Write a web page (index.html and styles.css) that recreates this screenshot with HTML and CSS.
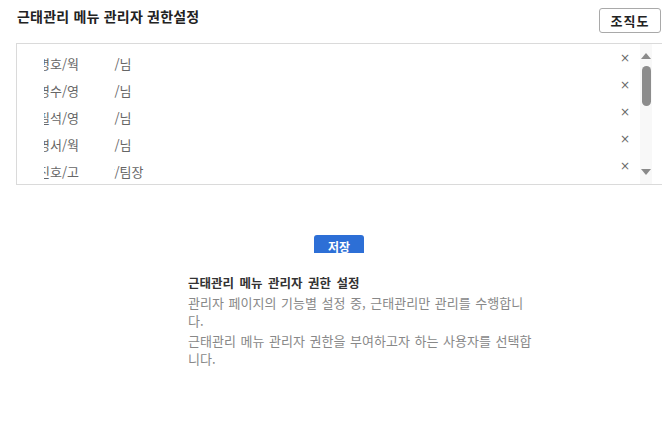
FILE: index.html
```html
<!DOCTYPE html>
<html lang="ko">
<head>
<meta charset="utf-8">
<link rel="stylesheet" href="styles.css">
</head>
<body>
<div class="page">
  <header class="top">
    <h1 class="title">근태관리 메뉴 관리자 권한설정</h1>
    <button class="org-btn">조직도</button>
  </header>

  <section class="box">
    <div class="list">
      <div class="row"><span class="c1"><span class="t1">병호/웍</span></span><span class="c2"><span class="t2">원/님</span></span><span class="x">×</span></div>
      <div class="row"><span class="c1"><span class="t1">영수/영</span></span><span class="c2"><span class="t2">원/님</span></span><span class="x">×</span></div>
      <div class="row"><span class="c1"><span class="t1">필석/영</span></span><span class="c2"><span class="t2">원/님</span></span><span class="x">×</span></div>
      <div class="row"><span class="c1"><span class="t1">영서/웍</span></span><span class="c2"><span class="t2">원/님</span></span><span class="x">×</span></div>
      <div class="row"><span class="c1"><span class="t1">진호/고</span></span><span class="c2"><span class="t2">장/팀장</span></span><span class="x">×</span></div>
    </div>
    <div class="scroll">
      <span class="arrow up"></span>
      <span class="thumb"></span>
      <span class="arrow down"></span>
    </div>
  </section>

  <div class="save-wrap">
    <div class="save-clip"><button class="save">저장</button></div>
  </div>

  <section class="desc">
    <h2 class="desc-title">근태관리 메뉴 관리자 권한 설정</h2>
    <p>관리자 페이지의 기능별 설정 중, 근태관리만 관리를 수행합니다.</p>
    <p>근태관리 메뉴 관리자 권한을 부여하고자 하는 사용자를 선택합니다.</p>
  </section>
</div>
</body>
</html>
```

FILE: styles.css
```css
html, body {
  margin: 0;
  padding: 0;
  background: #ffffff;
  overflow: hidden;
}

body {
  font-family: "Noto Sans CJK KR", "Noto Sans", sans-serif;
  font-size: 12px;
  color: #333;
}

.page {
  width: 662px;
  height: 448px;
}

.top {
  display: flex;
  justify-content: space-between;
  align-items: flex-start;
  padding-top: 7px;
}

.title {
  margin: 0;
  padding: 0 0 0 17px;
  font-size: 14px;
  letter-spacing: 0.2px;
  line-height: 18px;
  font-weight: bold;
  color: #222;
}

.org-btn {
  width: 62px;
  height: 25px;
  margin: 1px 1px 0 0;
  padding: 0;
  border: 1px solid #a9a9a9;
  border-radius: 3px;
  background: #fff;
  font-family: inherit;
  font-size: 13px;
  font-weight: bold;
  color: #222;
  letter-spacing: 1px;
}

.box {
  display: flex;
  margin: 10px 0 0 16px;
  height: 140px;
  border: 1px solid #dadada;
  border-right: none;
}

.list {
  flex: 1;
  padding: 6px 0 0 27px;
}

.row {
  display: flex;
  align-items: center;
  height: 27px;
  color: #666;
  font-size: 13px;
}

.c1 {
  width: 70px;
  overflow: hidden;
  white-space: nowrap;
}

.t1 {
  display: inline-block;
  margin-left: -6px;
}

.c2 {
  width: 80px;
  overflow: hidden;
  white-space: nowrap;
}

.t2 {
  display: inline-block;
  margin-left: -11.5px;
}

.x {
  margin-left: auto;
  margin-right: 10px;
  margin-bottom: 11px;
  font-family: "DejaVu Sans", sans-serif;
  font-size: 12px;
  color: #6a6a6a;
}

.scroll {
  width: 12px;
  margin-right: 10px;
  background: #f8f8f8;
  display: flex;
  flex-direction: column;
  align-items: center;
}

.arrow {
  width: 0;
  height: 0;
  border-left: 5px solid transparent;
  border-right: 5px solid transparent;
}

.arrow.up {
  margin-top: 9px;
  border-bottom: 6px solid #8a8a8a;
}

.thumb {
  width: 9px;
  height: 40px;
  margin-top: 7px;
  border-radius: 5px;
  background: #8c8c8c;
}

.arrow.down {
  margin-top: auto;
  margin-bottom: 9px;
  border-top: 6px solid #8a8a8a;
}

.save-wrap {
  padding: 50px 0 0 314px;
}

.save-clip {
  width: 50px;
  height: 18px;
  overflow: hidden;
  border-radius: 3px 3px 0 0;
}

.save {
  display: block;
  width: 50px;
  height: 24px;
  padding: 0;
  border: none;
  background: #2d6fd6;
  color: #fff;
  font-family: inherit;
  font-size: 12px;
  font-weight: bold;
  line-height: 24px;
}

.desc {
  width: 348px;
  margin: 22px 0 0 188px;
}

.desc-title {
  margin: 0 0 3px;
  font-size: 12.5px;
  font-weight: bold;
  line-height: 16px;
  color: #333;
  word-spacing: 2px;
}

.desc p {
  margin: 0 0 2px;
  font-size: 13px;
  line-height: 18px;
  color: #888;
  word-spacing: 1px;
}
```
